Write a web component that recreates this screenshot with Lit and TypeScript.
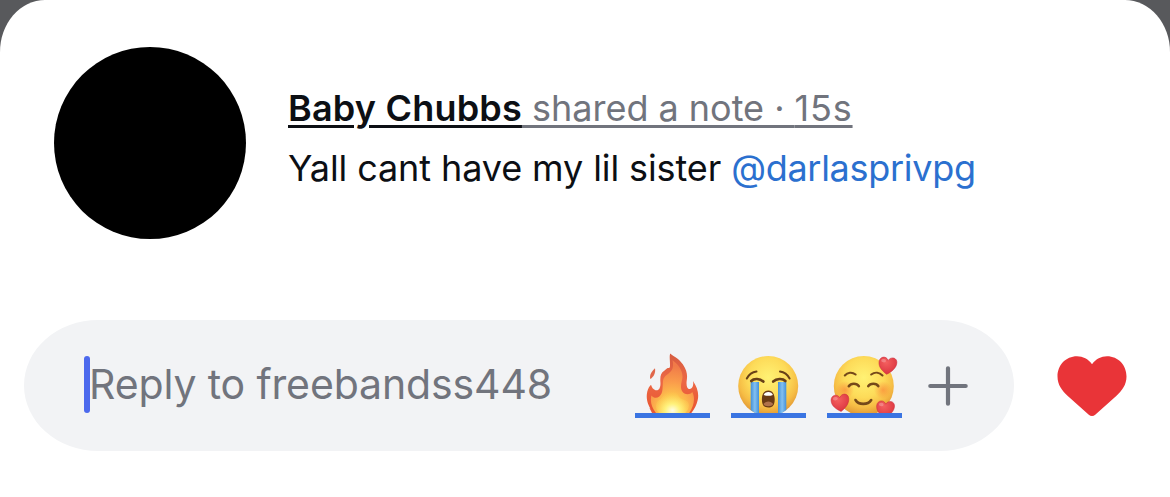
import { LitElement, html, css, svg } from "lit";
import { customElement, property } from "lit/decorators.js";

const miniHeart = (transform: string) => svg`
  <path transform=${transform} fill="url(#mini)" stroke="#c9283a" stroke-width=".5"
    d="M9 17.5C4 14.5 0 11 .2 5.6C.4 .4 6.8-1.2 9 3.6C11.5-1 18-.2 18 5.2C18 10.5 13.5 14.8 9 17.5Z"/>
  <ellipse transform=${transform} cx="4.6" cy="4.3" rx="2.4" ry="1.7" fill="#fff" opacity=".25"/>`;

const faceDefs = svg`
  <defs>
    <radialGradient id="face" cx=".5" cy=".36" r=".66">
      <stop offset="0" stop-color="#fff274"/>
      <stop offset=".5" stop-color="#fddb59"/>
      <stop offset=".75" stop-color="#f6bd45"/>
      <stop offset="1" stop-color="#dd8f30"/>
    </radialGradient>
    <linearGradient id="tear" x1="0" x2="1" y1="0" y2="0">
      <stop offset="0" stop-color="#4390d8"/>
      <stop offset=".5" stop-color="#83c0f0"/>
      <stop offset="1" stop-color="#4390d8"/>
    </linearGradient>
    <radialGradient id="blush">
      <stop offset="0" stop-color="#fa7d35" stop-opacity=".6"/>
      <stop offset="1" stop-color="#fa7d35" stop-opacity="0"/>
    </radialGradient>
    <radialGradient id="mini" cx=".4" cy=".3" r=".7">
      <stop offset="0" stop-color="#f4605f"/>
      <stop offset="1" stop-color="#dc3540"/>
    </radialGradient>
  </defs>`;

const artwork: Record<string, unknown> = {
  fire: svg`
    <defs>
      <linearGradient id="outer" x1="0" x2="0" y1="0" y2="1">
        <stop offset="0" stop-color="#d65c40"/>
        <stop offset=".45" stop-color="#ec6845"/>
        <stop offset="1" stop-color="#e9542f"/>
      </linearGradient>
      <radialGradient id="mid" cx=".5" cy=".95" r=".85">
        <stop offset="0" stop-color="#fff27a"/>
        <stop offset=".35" stop-color="#fdc24d"/>
        <stop offset=".65" stop-color="#fa9b4b"/>
        <stop offset="1" stop-color="#f07a48"/>
      </radialGradient>
      <radialGradient id="core" cx=".5" cy=".85" r=".65">
        <stop offset="0" stop-color="#fffde8"/>
        <stop offset=".35" stop-color="#fff27c"/>
        <stop offset="1" stop-color="#fdcb4b" stop-opacity="0"/>
      </radialGradient>
    </defs>
    <path fill="url(#outer)" d="M19 63C13 57 10.5 49 12.3 41.5C13 38.5 14.5 36.5 16 34.8C16.8 37.5 18 39.4 20.5 40.2C24.2 41.2 25.8 37 25.4 32C25 26.5 25.7 22.8 29.3 20.8C31 19.4 32 17.8 33.2 18C34.6 18.2 35.2 17.2 35 14.5C35 9.5 34.2 6.2 35.2 3.4C38 6 43.5 8 47.8 14.2C52.5 21 52.5 26 51.6 31.5C51.2 36.5 52.5 39.5 55 39C58 38 58.7 34.5 58 31C62.5 37.5 64.2 44 62.6 50.5C61.5 55.5 59 60 55.5 64Z"/>
    <path fill="url(#mid)" d="M21 63C16.5 57 15 52 16.4 45.5C18.5 48 21.5 48.8 24.3 46.5C28.5 43 27.3 37 28 31C28.8 25 34 24.7 36.8 20C38 18 38.5 14 37.5 10.2C42.5 14 47.8 19.5 47.5 27C47.3 31 44.5 36.5 47 41C49.4 45.2 55 45 57.3 42C60.8 49 58.5 57 53.5 64Z"/>
    <path fill="url(#core)" d="M25 64C20 60 19.5 53 24 50C29 48 29.5 40 34.8 35.5C37 42 40.5 40 43.5 46C46.2 51 53 49 54 54C54.5 58 52 62 48 65Z"/>
    <path fill="#e0664a" d="M15.2 29C14.4 24.5 16.5 21.5 20 18.2C20.8 22.5 18.8 27 15.2 29Z"/>
    <path fill="#e75c38" d="M14.5 58C17 58.6 18 60 19.7 63L17 63Z"/>`,
  cry: svg`${faceDefs}
    <circle cx="37.2" cy="36" r="30" fill="url(#face)"/>
    <path fill="url(#tear)" d="M19.7 32H28V63H24L19.7 60Z"/>
    <path fill="url(#tear)" d="M47 32H55.3V60L51 63H47Z"/>
    <g fill="none" stroke="#684017" stroke-linecap="round" stroke-width="2">
      <path d="M15.8 28.5C17.6 25 21 22 25.5 21.5"/>
      <path d="M49 21.5C53.5 22 56.8 25 58.6 28.5"/>
      <path stroke-width="2.7" d="M20.3 31C23 28 29 28.5 32.3 31.6"/>
      <path stroke-width="2.7" d="M42.2 31.6C45.5 28.5 51.5 28 54.4 31"/>
    </g>
    <path fill="#6a3a15" d="M37.3 40.5C42 40.5 43.8 45 43.7 49.5C43.6 55 42 57.5 37.3 57.5C32.6 57.5 31 55 30.9 49.5C30.8 45 32.6 40.5 37.3 40.5Z"/>
    <path fill="#fff" d="M32.7 44.9C33.7 41 40.9 41 41.9 44.9Q37.3 46.6 32.7 44.9Z"/>
    <path fill="#b0714b" d="M32.5 54C34.3 50.5 40.3 50.5 42.1 54C41 57 33.6 57 32.5 54Z"/>`,
  love: svg`${faceDefs}
    <circle cx="36.8" cy="36" r="30" fill="url(#face)"/>
    <circle cx="18" cy="40" r="9" fill="url(#blush)"/>
    <circle cx="56" cy="40" r="9" fill="url(#blush)"/>
    <g fill="none" stroke="#75491a" stroke-linecap="round" stroke-width="2.1">
      <path d="M17.8 25.5C20.5 22.4 25 21.6 28.6 24.5"/>
      <path d="M44.2 24.5C48 21.6 52.5 22.4 55.5 25.5"/>
      <path stroke-width="2.6" d="M21.8 36.2C24 32.9 29.8 32.9 31.8 36.2"/>
      <path stroke-width="2.6" d="M41.3 36.2C43.2 32.9 49.5 32.9 51.3 36.2"/>
      <path stroke-width="2.6" d="M28.5 50C31.5 55.2 41 55.2 44.2 50"/>
    </g>
    ${miniHeart("translate(51.5 6.8) rotate(6 9 9)")}
    ${miniHeart("translate(4.2 44) rotate(-6 9 9)")}
    ${miniHeart("translate(49.2 50.5) rotate(5 9 9)")}`,
};

@customElement("quick-emoji")
export class QuickEmoji extends LitElement {
  @property() name = "fire";
  static styles = css`
    :host { display: block; width: 75px; height: 68px; border-bottom: 5px solid #3a74e2; overflow: hidden; box-sizing: border-box; }
    .art { display: block; width: 75px; height: 63px; }
  `;
  render() {
    return html`<svg class="art" viewBox="0 0 75 63" aria-hidden="true">${artwork[this.name]}</svg>`;
  }
}

@customElement("app-root")
export class AppRoot extends LitElement {
  static styles = css`
    :host { display: block; height: 497px; background: #58595c; font-family: Inter, "Liberation Sans", sans-serif; }
    .sheet { box-sizing: border-box; height: 497px; padding: 47px 0 0 24px; background: #fff; border-radius: 45px 45px 0 0 / 52px 52px 0 0; overflow: hidden; }
    .note { display: flex; height: 273px; padding-left: 30px; }
    .avatar { flex: none; width: 192px; height: 192px; border-radius: 50%; background: #000; }
    .copy { padding: 31px 0 0 42px; white-space: nowrap; font-size: 36px; color: #0c0f14; }
    .line { height: 60px; line-height: 60px; }
    .name, .meta, .time { text-decoration: underline; text-decoration-thickness: 3px; text-underline-offset: 4px; }
    .name { font-weight: 600; letter-spacing: .2px; }
    .meta, .time { color: #71747d; }
    .meta { letter-spacing: -.02px; }
    .time { letter-spacing: .8px; }
    .body { letter-spacing: -.1px; }
    .mention { color: #2b70cf; letter-spacing: -.28px; }
    .reply { display: flex; align-items: center; height: 131px; }
    .field { display: flex; align-items: center; box-sizing: border-box; width: 990px; height: 131px; padding-left: 60px; border-radius: 74px / 65.5px; background: #f2f3f5; }
    .caret { width: 6px; height: 57px; border-radius: 3px; background: #4c69ed; margin-top: -2px; }
    .hint { width: 546px; margin: -3px 0 0 -1px; color: #71747d; font-size: 41px; line-height: 60px; letter-spacing: -.13px; white-space: nowrap; }
    .emojis { display: flex; gap: 21px; margin-top: -4px; }
    .plus { width: 40px; height: 40px; margin-left: 26px; }
    .heart { width: 70px; height: 61px; margin: 1px 0 0 43px; }
  `;

  render() {
    return html`
      <main class="sheet">
        <section class="note">
          <div class="avatar"></div>
          <div class="copy">
            <div class="line"><span class="name">Baby Chubbs</span><span class="meta"> shared a note · </span><span class="time">15s</span></div>
            <div class="line"><span class="body">Yall cant have my lil sister </span><span class="mention">@darlasprivpg</span></div>
          </div>
        </section>
        <section class="reply">
          <div class="field">
            <div class="caret"></div>
            <div class="hint">Reply to freebandss448</div>
            <div class="emojis">
              <quick-emoji name="fire"></quick-emoji>
              <quick-emoji name="cry"></quick-emoji>
              <quick-emoji name="love"></quick-emoji>
            </div>
            <svg class="plus" viewBox="0 0 40 40" fill="none" stroke="#71747d" stroke-width="4.2" stroke-linecap="round">
              <path d="M20 2.3V37.7M2.3 20H37.7"/>
            </svg>
          </div>
          <svg class="heart" viewBox="0 0 70 61" fill="#e93438">
            <path d="M35 8.2C31 3 26 .3 20 .3C8.8 .3 .5 9.2 .5 20.5C.5 29 5 34.5 10.5 39.8L31.5 58.6C33.8 60.6 36.2 60.6 38.5 58.6L59.5 39.8C65 34.5 69.5 29 69.5 20.5C69.5 9.2 61.2 .3 50 .3C44 .3 39 3 35 8.2Z"/>
          </svg>
        </section>
      </main>`;
  }
}
